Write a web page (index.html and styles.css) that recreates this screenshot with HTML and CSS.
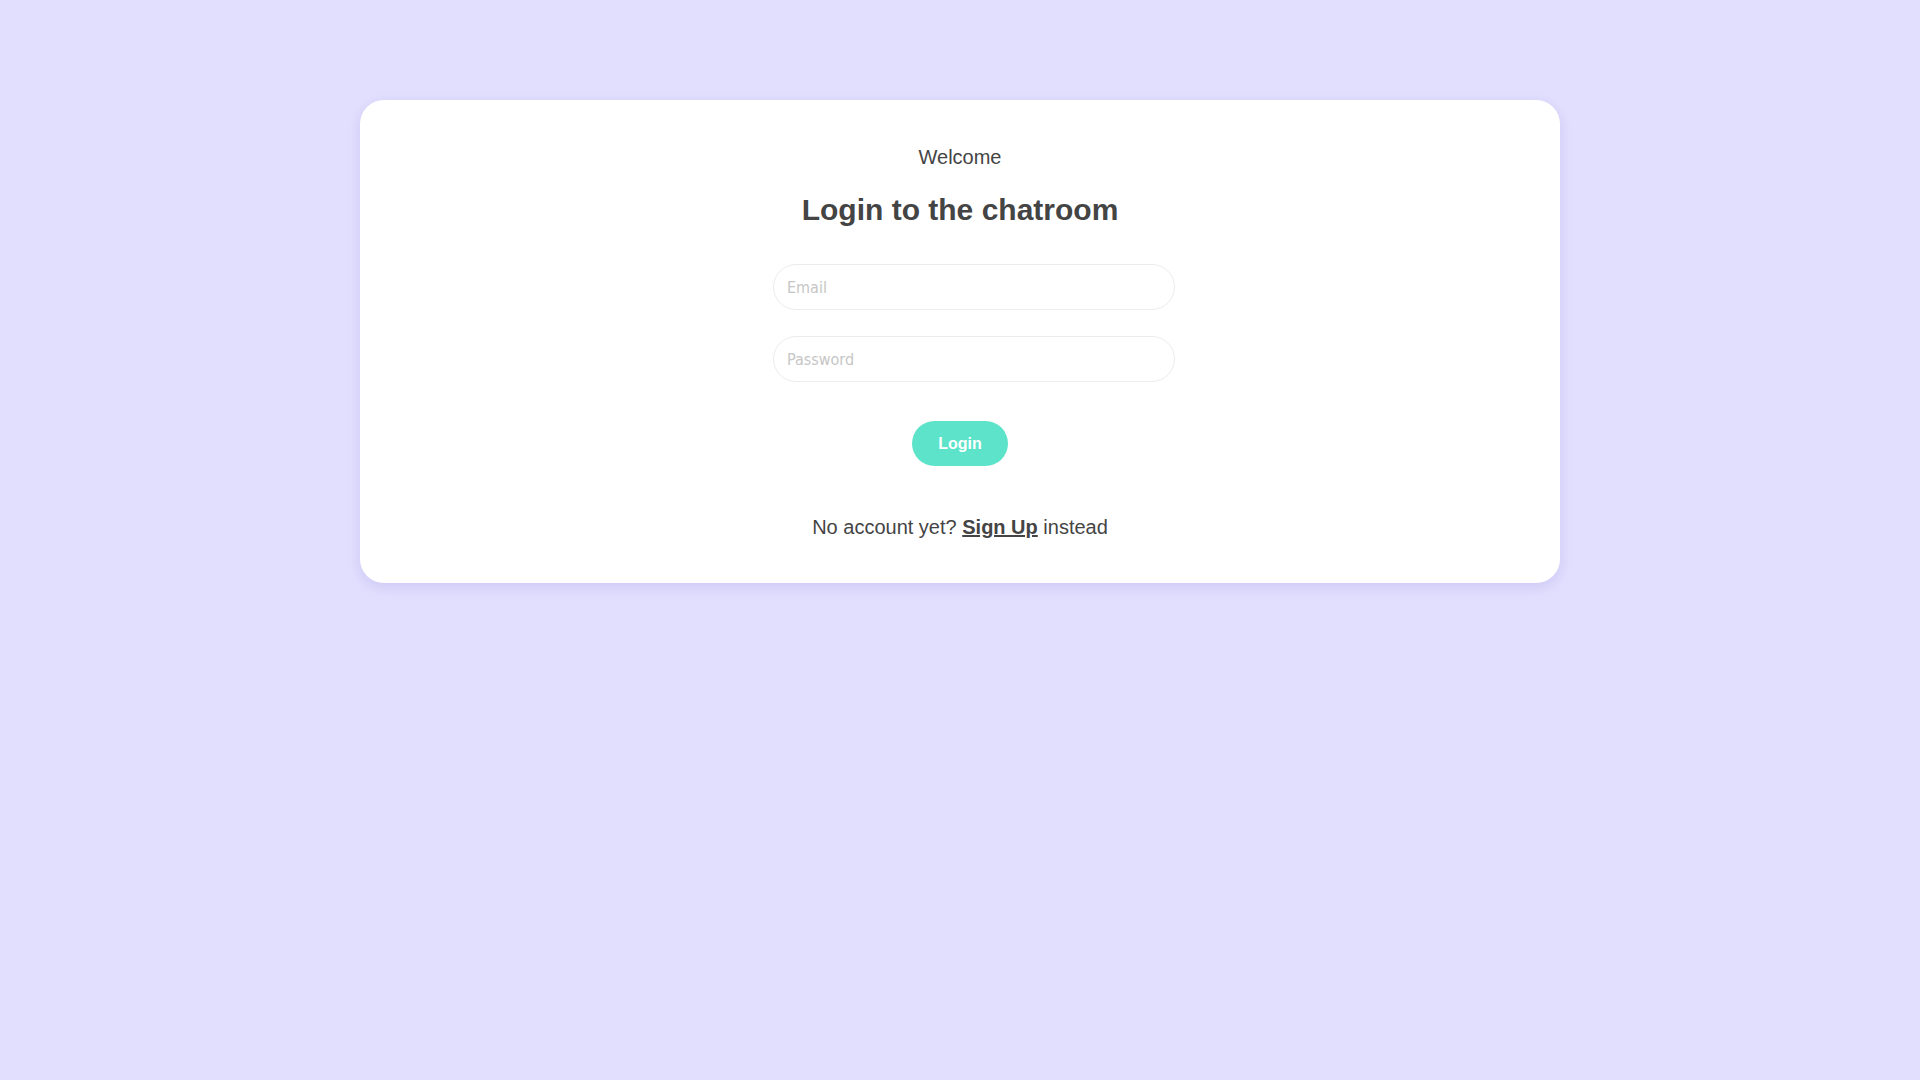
FILE: index.html
```html
<!DOCTYPE html>
<html lang="en">
<head>
<meta charset="utf-8">
<title>Login</title>
<link rel="stylesheet" href="styles.css">
</head>
<body>
<main class="page">
  <section class="card">
    <p class="welcome">Welcome</p>
    <h1 class="title">Login to the chatroom</h1>
    <form class="form">
      <input class="field" type="email" placeholder="Email">
      <input class="field field-pass" type="password" placeholder="Password">
      <button class="btn" type="button">Login</button>
    </form>
    <p class="alt">No account yet? <a class="alt-link" href="#">Sign Up</a> instead</p>
  </section>
</main>
</body>
</html>
```
FILE: styles.css
```css
html, body {
  margin: 0;
  padding: 0;
  height: 100%;
}
body {
  background: #e2dffe;
  font-family: "Liberation Sans", Arial, sans-serif;
  color: #444444;
}
.page {
  display: flex;
  justify-content: center;
  padding-top: 100px;
}
.card {
  width: 1200px;
  box-sizing: border-box;
  background: #ffffff;
  border-radius: 24px;
  box-shadow: 0 4px 14px rgba(110, 95, 200, 0.18);
  padding: 45px 0 44px;
  display: flex;
  flex-direction: column;
  align-items: center;
}
.welcome {
  margin: 0;
  font-size: 20px;
  line-height: 24px;
}
.title {
  margin: 23px 0 0;
  font-size: 30px;
  line-height: 36px;
  font-weight: bold;
}
.form {
  margin-top: 36px;
  display: flex;
  flex-direction: column;
  align-items: center;
}
.field {
  width: 402px;
  height: 46px;
  box-sizing: border-box;
  margin: 0 0 0 28px;
  padding: 0 13px;
  border: 1px solid #ececec;
  border-radius: 23px;
  background: #ffffff;
  font-family: "DejaVu Sans Condensed", "DejaVu Sans", Verdana, sans-serif;
  font-stretch: condensed;
  font-size: 16px;
  color: #444;
  outline: none;
}
.field::placeholder {
  color: #c6c6c6;
}
.field-pass {
  margin-top: 26px;
}
.btn {
  margin-top: 39px;
  width: 96px;
  height: 45px;
  border: none;
  border-radius: 23px;
  background: #5ce3c9;
  color: #ffffff;
  font-family: "Liberation Sans", Arial, sans-serif;
  font-size: 16px;
  font-weight: bold;
  cursor: pointer;
}
.alt {
  margin: 49px 0 0;
  font-size: 20px;
  line-height: 24px;
}
.alt-link {
  color: #444444;
  font-weight: bold;
  text-decoration: underline;
}
```
